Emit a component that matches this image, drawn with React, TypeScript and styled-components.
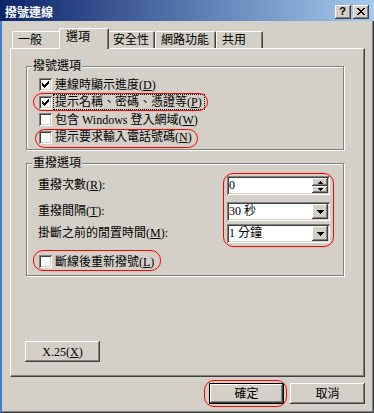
import React from 'react';
import styled, { createGlobalStyle, css } from 'styled-components';

const FACE = '#D4D0C8';

const GlobalStyle = createGlobalStyle`
  html, body { margin: 0; padding: 0; background: ${FACE}; }
  body {
    font-family: "Liberation Serif", "Noto Sans CJK TC", serif;
    font-size: 12px;
    color: #000;
  }
  *, *::before, *::after { box-sizing: border-box; }
`;

const raised = css`
  background: ${FACE};
  box-shadow: inset -1px -1px #404040, inset 1px 1px #fff, inset -2px -2px #808080, inset 2px 2px ${FACE};
`;

const sunken = css`
  box-shadow: inset 1px 1px #808080, inset -1px -1px #fff, inset 2px 2px #404040, inset -2px -2px ${FACE};
`;

const Window = styled.div`
  width: 374px;
  height: 413px;
  display: flex;
  flex-direction: column;
  background: ${FACE};
  overflow: hidden;
`;

const TitleBar = styled.div`
  height: 21px;
  flex: none;
  padding: 3px 5px 0 5px;
  display: flex;
  align-items: center;
  gap: 2px;
  background: linear-gradient(to right, #0a246a, #a6caf0);
`;

const TitleText = styled.div`
  flex: 1;
  color: #fff;
  font-family: "Noto Sans CJK TC", sans-serif;
  font-weight: bold;
  font-size: 12px;
  line-height: 14px;
`;

const CaptionButton = styled.div`
  ${raised};
  width: 16px;
  height: 14px;
  display: flex;
  align-items: center;
  justify-content: center;
  font-family: "Liberation Sans", sans-serif;
  font-weight: bold;
  font-size: 11px;
  line-height: 11px;
  padding: 0 1px 1px 0;
`;

const Body = styled.div`
  flex: 1;
  display: flex;
  flex-direction: column;
  border-left: 2px solid #4a7cc9;
  border-right: 1px solid #404040;
  border-bottom: 1px solid #404040;
  box-shadow: inset -1px -1px #808080;
  padding: 7px 8px 8px 8px;
`;

const TabStrip = styled.div`
  height: 20px;
  flex: none;
  display: flex;
  align-items: flex-end;
  padding-left: 2px;
`;

const Tab = styled.div<{ $w: number; $active?: boolean }>`
  width: ${p => p.$w}px;
  height: 17px;
  padding: 1px 0 0 5px;
  border-top: 1px solid #fff;
  border-left: 1px solid #fff;
  border-right: 1px solid #404040;
  box-shadow: inset -1px 0 #808080;
  border-radius: 2px 2px 0 0;
  background: ${FACE};
  font-family: "Noto Sans CJK TC", sans-serif;
  font-size: 12px;
  line-height: 12px;
  white-space: nowrap;
  ${p =>
    p.$active &&
    css`
      width: ${p.$w + 4}px;
      height: 21px;
      margin: 0 -2px -1px -2px;
      padding-left: 6px;
      position: relative;
      z-index: 1;
    `}
`;

const Panel = styled.div`
  height: 329px;
  flex: none;
  display: flex;
  flex-direction: column;
  border-top: 1px solid #fff;
  border-left: 1px solid #fff;
  border-right: 1px solid #404040;
  border-bottom: 1px solid #404040;
  box-shadow: inset -1px -1px #808080;
  padding: 17px 20px 14px 15px;
`;

const Group = styled.div<{ $mt?: number; $pb: number }>`
  margin-top: ${p => p.$mt ?? 0}px;
  border: 1px solid #808080;
  box-shadow: inset 1px 1px #fff, 1px 1px #fff;
  padding: 0 13px ${p => p.$pb}px 12px;
  display: flex;
  flex-direction: column;
  align-items: flex-start;
`;

const GroupTitle = styled.div`
  margin: -8px 0 0 -7px;
  padding: 0 1px;
  background: ${FACE};
  line-height: 14px;
  white-space: nowrap;
`;

const Rows = styled.div<{ $mt: number }>`
  margin-top: ${p => p.$mt}px;
  display: flex;
  flex-direction: column;
  align-items: flex-start;
`;

const Highlight = styled.div<{ $t: number; $r: number; $b: number; $l: number }>`
  position: relative;
  &::after {
    content: '';
    position: absolute;
    top: ${p => -p.$t}px;
    right: ${p => -p.$r}px;
    bottom: ${p => -p.$b}px;
    left: ${p => -p.$l}px;
    border: 1px solid #ff0000;
    border-radius: 10px;
    pointer-events: none;
  }
`;

const CheckRow = styled.div`
  display: flex;
  align-items: center;
  height: 17.5px;
`;

const Box = styled.span`
  width: 13px;
  height: 13px;
  flex: none;
  background: #fff;
  ${sunken};
  display: flex;
  padding: 3px;
`;

const CheckLabel = styled.span<{ $focus?: boolean }>`
  margin-left: 1px;
  padding: 1px 2px 1px 1px;
  border: 1px dotted ${p => (p.$focus ? '#000' : 'transparent')};
  line-height: 12px;
  white-space: nowrap;
`;

const FieldGrid = styled.div`
  align-self: stretch;
  margin: 6px 0 0 -1px;
  display: grid;
  grid-template-columns: 1fr 103px;
  grid-template-rows: 19px 26px 22px;
  align-items: end;
`;

const FieldLabel = styled.div<{ $row: number }>`
  grid-row: ${p => p.$row};
  grid-column: 1;
  line-height: 19px;
  white-space: nowrap;
`;

const FieldCell = styled.div<{ $row: number }>`
  grid-row: ${p => p.$row};
  grid-column: 2;
  height: 19px;
  background: #fff;
  ${sunken};
  padding: 2px;
  display: flex;
  align-items: center;
`;

const FieldText = styled.span`
  flex: 1;
  line-height: 15px;
  white-space: nowrap;
`;

const FieldOutline = styled.div`
  grid-area: 1 / 2 / 4 / 3;
  align-self: stretch;
  margin: -3px -4px -4px -4px;
  border: 1px solid #ff0000;
  border-radius: 10px;
  pointer-events: none;
`;

const SpinStack = styled.div`
  width: 16px;
  height: 15px;
  display: flex;
  flex-direction: column;
`;

const SpinButton = styled.div<{ $h: number }>`
  ${raised};
  height: ${p => p.$h}px;
  display: flex;
  align-items: center;
  justify-content: center;
`;

const DropButton = styled.div`
  ${raised};
  width: 16px;
  height: 15px;
  display: flex;
  align-items: center;
  justify-content: center;
`;

const PushButton = styled.div<{ $default?: boolean }>`
  ${raised};
  width: 75px;
  height: 21px;
  display: flex;
  align-items: center;
  justify-content: center;
  line-height: 14px;
  white-space: nowrap;
  ${p =>
    p.$default &&
    css`
      border: 1px solid #000;
      box-shadow: inset -1px -1px #404040, inset 1px 1px #fff, inset -2px -2px #808080;
    `}
`;

const X25Button = styled(PushButton)`
  margin: auto 0 0 -1px;
`;

const ButtonBar = styled.div`
  margin-top: 6px;
  display: flex;
  justify-content: flex-end;
  gap: 6px;
`;

const px = { shapeRendering: 'crispEdges' as const };

const CheckMark = () => (
  <svg width="7" height="7" viewBox="0 0 7 7" style={px}>
    <path d="M0 2h1v3H0zM1 3h1v3H1zM2 4h1v3H2zM3 3h1v3H3zM4 2h1v3H4zM5 1h1v3H5zM6 0h1v3H6z" fill="#000" />
  </svg>
);

const CloseGlyph = () => (
  <svg width="8" height="7" viewBox="0 0 8 7" style={px}>
    <path
      d="M0 0h2v1H0zM6 0h2v1H6zM1 1h2v1H1zM5 1h2v1H5zM2 2h4v1H2zM3 3h2v1H3zM2 4h4v1H2zM1 5h2v1H1zM5 5h2v1H5zM0 6h2v1H0zM6 6h2v1H6z"
      fill="#000"
    />
  </svg>
);

const UpArrow = () => (
  <svg width="5" height="3" viewBox="0 0 5 3" style={px}>
    <path d="M2 0h1v1H2zM1 1h3v1H1zM0 2h5v1H0z" fill="#000" />
  </svg>
);

const DownArrow = () => (
  <svg width="5" height="3" viewBox="0 0 5 3" style={px}>
    <path d="M0 0h5v1H0zM1 1h3v1H1zM2 2h1v1H2z" fill="#000" />
  </svg>
);

const ComboArrow = () => (
  <svg width="7" height="4" viewBox="0 0 7 4" style={px}>
    <path d="M0 0h7v1H0zM1 1h5v1H1zM2 2h3v1H2zM3 3h1v1H3z" fill="#000" />
  </svg>
);

const Check = ({ checked }: { checked?: boolean }) => <Box>{checked && <CheckMark />}</Box>;

type RowProps = { checked?: boolean; focus?: boolean; children: React.ReactNode };
const CheckItem = ({ checked, focus, children }: RowProps) => (
  <CheckRow>
    <Check checked={checked} />
    <CheckLabel $focus={focus}>{children}</CheckLabel>
  </CheckRow>
);

export default function App() {
  return (
    <>
      <GlobalStyle />
      <Window>
        <TitleBar>
          <TitleText>撥號連線</TitleText>
          <CaptionButton>?</CaptionButton>
          <CaptionButton>
            <CloseGlyph />
          </CaptionButton>
        </TitleBar>
        <Body>
          <TabStrip>
            <Tab $w={49}>一般</Tab>
            <Tab $w={46} $active>
              選項
            </Tab>
            <Tab $w={48}>安全性</Tab>
            <Tab $w={61}>網路功能</Tab>
            <Tab $w={47}>共用</Tab>
          </TabStrip>
          <Panel>
            <Group $pb={3}>
              <GroupTitle>撥號選項</GroupTitle>
              <Rows $mt={3}>
                <CheckItem checked>
                  連線時顯示進度(<u>D</u>)
                </CheckItem>
                <Highlight $t={1} $r={3} $b={0} $l={6}>
                  <CheckItem checked focus>
                    提示名稱、密碼、憑證等(<u>P</u>)
                  </CheckItem>
                </Highlight>
                <CheckItem>
                  包含 Windows 登入網域(<u>W</u>)
                </CheckItem>
                <Highlight $t={0} $r={3} $b={2} $l={4}>
                  <CheckItem>
                    提示要求輸入電話號碼(<u>N</u>)
                  </CheckItem>
                </Highlight>
              </Rows>
            </Group>
            <Group $mt={13} $pb={4.5}>
              <GroupTitle>重撥選項</GroupTitle>
              <FieldGrid>
                <FieldLabel $row={1}>
                  重撥次數(<u>R</u>):
                </FieldLabel>
                <FieldCell $row={1}>
                  <FieldText>0</FieldText>
                  <SpinStack>
                    <SpinButton $h={8}>
                      <UpArrow />
                    </SpinButton>
                    <SpinButton $h={7}>
                      <DownArrow />
                    </SpinButton>
                  </SpinStack>
                </FieldCell>
                <FieldLabel $row={2}>
                  重撥間隔(<u>T</u>):
                </FieldLabel>
                <FieldCell $row={2}>
                  <FieldText>30 秒</FieldText>
                  <DropButton>
                    <ComboArrow />
                  </DropButton>
                </FieldCell>
                <FieldLabel $row={3}>
                  掛斷之前的閒置時間(<u>M</u>):
                </FieldLabel>
                <FieldCell $row={3}>
                  <FieldText>1 分鐘</FieldText>
                  <DropButton>
                    <ComboArrow />
                  </DropButton>
                </FieldCell>
                <FieldOutline />
              </FieldGrid>
              <Rows $mt={10}>
                <Highlight $t={3} $r={4} $b={0} $l={6}>
                  <CheckItem>
                    斷線後重新撥號(<u>L</u>)
                  </CheckItem>
                </Highlight>
              </Rows>
            </Group>
            <X25Button>
              X.25(<u>X</u>)
            </X25Button>
          </Panel>
          <ButtonBar>
            <Highlight $t={3} $r={3} $b={3} $l={5}>
              <PushButton $default>確定</PushButton>
            </Highlight>
            <PushButton>取消</PushButton>
          </ButtonBar>
        </Body>
      </Window>
    </>
  );
}
